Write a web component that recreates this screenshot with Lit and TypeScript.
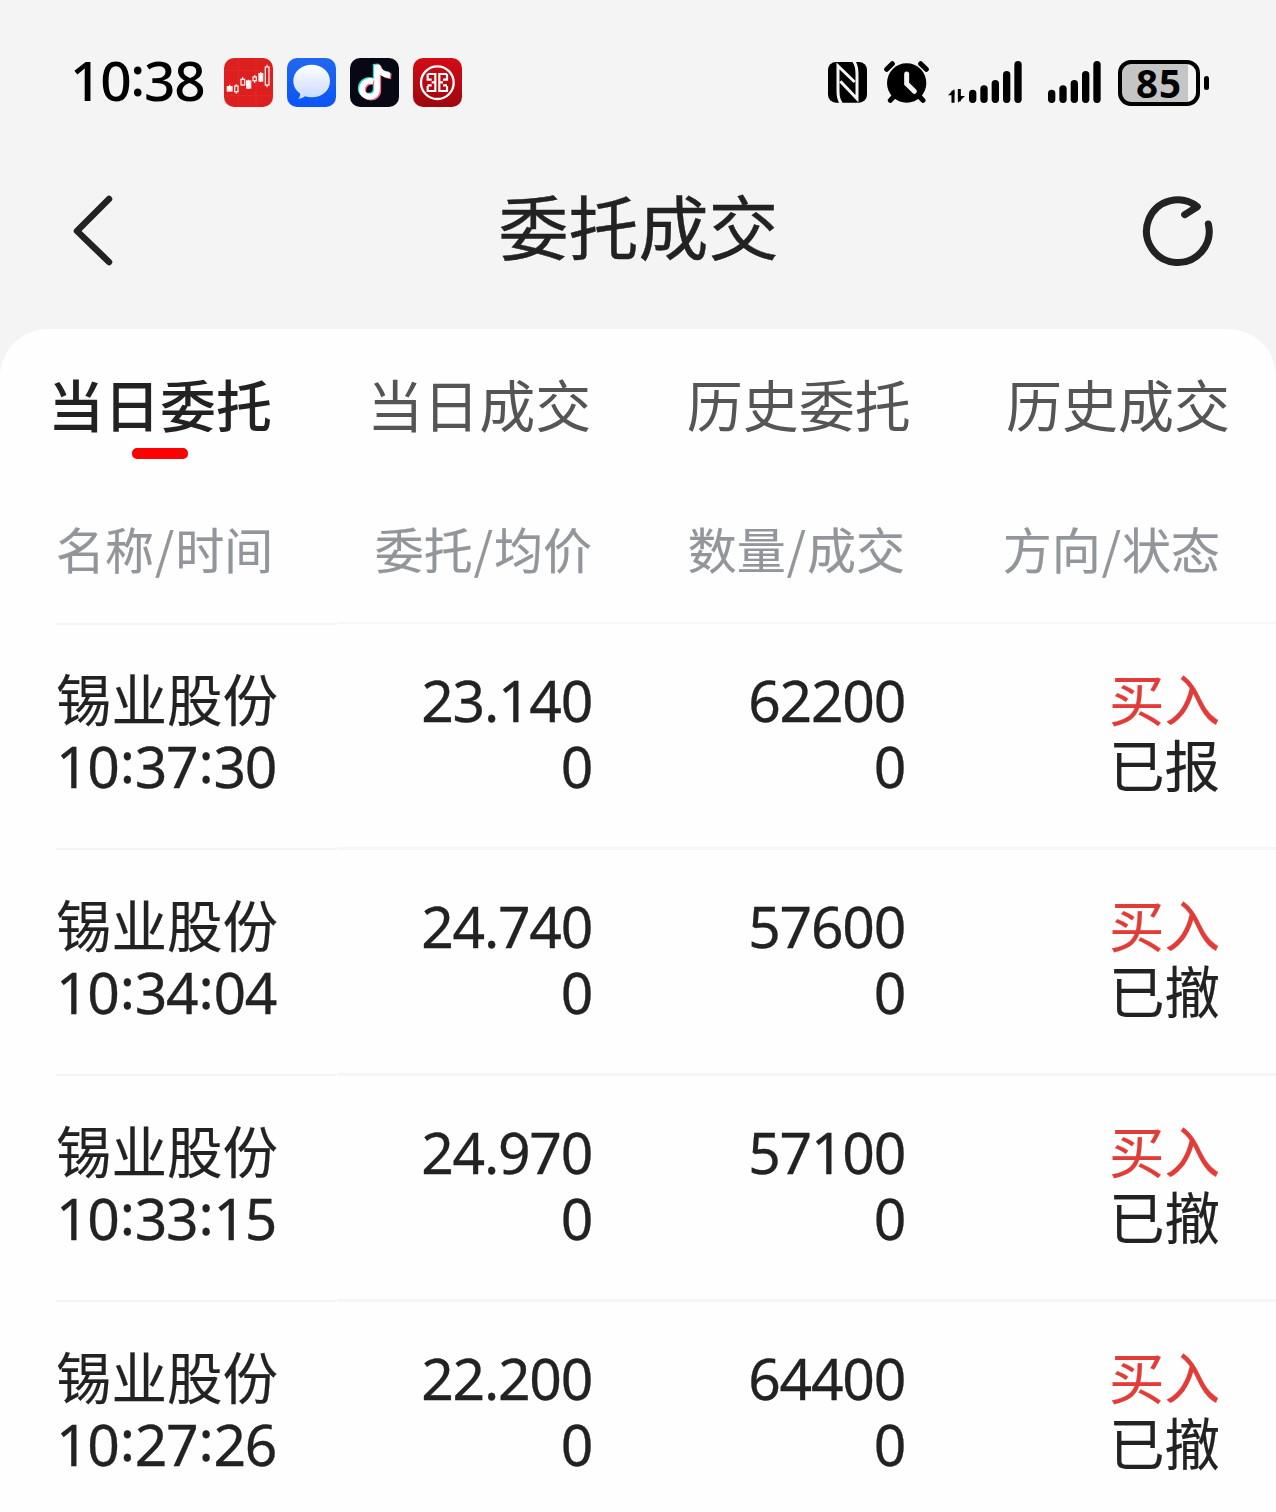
import { LitElement, html, svg, css } from "lit";
import { customElement } from "lit/decorators.js";

interface Order {
  name: string;
  time: string;
  price: string;
  avg: string;
  qty: string;
  filled: string;
  side: string;
  status: string;
}

const order = (time: string, price: string, qty: string, status: string): Order => ({
  name: "锡业股份", time, price, avg: "0", qty, filled: "0", side: "买入", status,
});

const ORDERS: Order[] = [
  order("10:37:30", "23.140", "62200", "已报"),
  order("10:34:04", "24.740", "57600", "已撤"),
  order("10:33:15", "24.970", "57100", "已撤"),
  order("10:27:26", "22.200", "64400", "已撤"),
];

const TABS = ["当日委托", "当日成交", "历史委托", "历史成交"];

/* Clock text with colons centred on the digit height. */
const clock = (t: string) =>
  t.split(":").map((p, i) => html`${i ? html`<span class="colon">:</span>` : ""}${p}`);

const shared = css`
  * { box-sizing: border-box; }
  .colon { vertical-align: 0.09em; line-height: 0; }
  svg { display: block; flex: none; }
`;

@customElement("status-bar")
export class StatusBar extends LitElement {
  static styles = [shared, css`
    :host { display: flex; align-items: flex-start; height: 164px; padding: 0 67px 0 70px; color: #000; }
    .time { width: 154px; padding-top: 40px; font: 500 55px/80px "Noto Sans", sans-serif; letter-spacing: -1.3px; white-space: nowrap; }
    .apps { display: flex; gap: 14px; padding-top: 58px; flex: 1; }
    .nfc { margin: 62px 17px 0 0; }
    .alarm { margin: 60px 19px 0 0; }
    .sig1 { margin: 60px 26px 0 0; }
    .sig2 { margin: 60px 17px 0 0; }
    .battery { display: flex; align-items: center; margin-top: 60px; gap: 4px; }
    .cell { width: 82px; height: 46px; border: 4px solid #000; border-radius: 13px; text-align: center;
      background: linear-gradient(90deg, #c5c5c5 66px, #f4f4f4 66px);
      font: 700 38.5px/39px "Noto Sans", sans-serif; letter-spacing: 1px; }
    .nub { width: 5px; height: 14px; border-radius: 3px; background: #000; }
  `];

  private bars(x: number) {
    const tops = [119, 106, 90, 63, 33];
    return tops.map((y, i) => svg`<rect x=${x + i * 34} y=${y} width="22" height=${159 - y} rx="11"/>`);
  }

  render() {
    return html`
      <div class="time">${clock("10:38")}</div>
      <div class="apps">
        <svg width="49" height="49" viewBox="0 0 147 147">
          <rect width="147" height="147" rx="30" fill="#de1f20"/>
          <path d="M43 0V147M96 0V147M0 38H147M0 113H147" stroke="#e3302c" stroke-width="2"/>
          <g stroke="#ffe9e6" stroke-width="4" fill="none">
            <path d="M17 80V101M37 79V107M56 57V84M73 65V93M92 51V75M110 42V72M129 20V88"/>
            <g fill="#fff"><rect x="10" y="86" width="14" height="13"/><rect x="68" y="69" width="12" height="21"/><rect x="105" y="47" width="11" height="22"/></g>
            <g fill="#de1f20"><rect x="32" y="84" width="10" height="17"/><rect x="51" y="64" width="11" height="17"/><rect x="87" y="57" width="10" height="11"/><rect x="124" y="27" width="11" height="54"/></g>
          </g>
        </svg>
        <svg width="49" height="49" viewBox="0 0 147 147">
          <defs>
            <linearGradient id="blue" x2="0" y2="1"><stop stop-color="#2268ee"/><stop offset="1" stop-color="#0a55f6"/></linearGradient>
            <linearGradient id="bubble" x2="0" y2="1"><stop stop-color="#fff"/><stop offset="1" stop-color="#c8dafd"/></linearGradient>
          </defs>
          <rect width="147" height="147" rx="30" fill="url(#blue)"/>
          <path d="M74 20C105 20 129 41 129 69C129 98 105 118 74 118C67 118 60 117 54 115C48 120 42 122 34 122C39 117 40 111 39 106C26 97 19 84 19 69C19 41 43 20 74 20Z" fill="url(#bubble)"/>
        </svg>
        <svg width="49" height="49" viewBox="0 0 147 147">
          <rect width="147" height="147" rx="30" fill="#080814"/>
          <g fill="none" stroke-width="17">
            <path d="M68 68C47 62 33 78 34 94C36 120 79 122 79 92V19C83 37 96 48 118 50" stroke="#33d8c8" transform="translate(-2 -1)"/>
            <path d="M68 68C47 62 33 78 34 94C36 120 79 122 79 92V19C83 37 96 48 118 50" stroke="#f4688a" transform="translate(6 5)"/>
            <path d="M68 68C47 62 33 78 34 94C36 120 79 122 79 92V19C83 37 96 48 118 50" stroke="#fff" transform="translate(2 2)"/>
          </g>
        </svg>
        <svg width="49" height="49" viewBox="0 0 147 147">
          <defs><linearGradient id="red" x2="0" y2="1"><stop stop-color="#d40b16"/><stop offset="1" stop-color="#9d070f"/></linearGradient></defs>
          <rect width="147" height="147" rx="30" fill="url(#red)"/>
          <circle cx="73" cy="74" r="49" fill="none" stroke="#fff" stroke-width="7"/>
          <path d="M44 48H67V73M44 48V65H56M44 82H56M67 73H56M67 73V99H44V84M102 48H79V73M102 48V65H90M102 82H90M79 73H90M79 73V99H102V84" fill="none" stroke="#fff" stroke-width="6.5"/>
        </svg>
      </div>
      <svg class="nfc" width="39" height="41" viewBox="24 36 117 123">
        <rect x="24" y="36" width="117" height="122" rx="24"/>
        <path d="M64 160Q54 148 54 122V48L104 96" fill="none" stroke="#f4f4f4" stroke-width="9"/>
        <path d="M61 94L111 146V72Q111 46 101 34" fill="none" stroke="#f4f4f4" stroke-width="9"/>
      </svg>
      <svg class="alarm" width="45" height="44" viewBox="192 30 135 132">
        <g fill="none" stroke="#000" stroke-width="15" stroke-linecap="round">
          <path d="M200 58L217 41M302 41L319 58M223 138L211 151M297 138L309 151"/>
        </g>
        <circle cx="260" cy="99" r="59"/>
        <path d="M260 72V101L283 124" fill="none" stroke="#f4f4f4" stroke-width="15" stroke-linecap="round"/>
      </svg>
      <svg class="sig1" width="74" height="44" viewBox="384 30 222 132">
        <path d="M399 158V122M418 117V154" fill="none" stroke="#000" stroke-width="9"/>
        <path d="M384 136L403 117V136ZM414 158L435 138H414Z"/>
        ${this.bars(447)}
      </svg>
      <svg class="sig2" width="53" height="44" viewBox="54 30 159 132">${this.bars(54)}</svg>
      <div class="battery"><div class="cell">85</div><div class="nub"></div></div>
    `;
  }
}

@customElement("title-bar")
export class TitleBar extends LitElement {
  static styles = [shared, css`
    :host { display: flex; align-items: flex-start; justify-content: space-between; height: 165px; padding: 0 61px 0 70px; color: #222; }
    .title { font: 400 70px/100px "Noto Sans CJK SC", sans-serif; padding-top: 11px; margin-left: 18px; -webkit-text-stroke: 0.4px #222; }
    .back { margin-top: 29px; }
    .refresh { margin-top: 30px; }
  `];
  render() {
    return html`
      <svg class="back" width="50" height="76" viewBox="0 0 50 76">
        <path d="M39 6L7 38L39 69" fill="none" stroke="#222" stroke-width="6.5" stroke-linecap="round" stroke-linejoin="round"/>
      </svg>
      <div class="title">委托成交</div>
      <svg class="refresh" width="76" height="76" viewBox="27 39 228 228">
        <path d="M235 129A94 94 0 1 1 202 77L164 101" fill="none" stroke="#222" stroke-width="21" stroke-linecap="round" stroke-linejoin="round"/>
      </svg>
    `;
  }
}

@customElement("tab-strip")
export class TabStrip extends LitElement {
  static styles = [shared, css`
    :host { display: flex; justify-content: space-between; height: 119px; padding: 34px 46px 0 48px; }
    .tab { display: flex; flex-direction: column; align-items: center; font: 400 56px/80px "Noto Sans CJK SC", sans-serif; color: #555; }
    .active { color: #222; font-weight: 500; }
    .active::after { content: ""; width: 56px; height: 11px; border-radius: 5px; background: #fe0000; margin-top: 5px; }
  `];
  render() {
    return html`${TABS.map((t, i) => html`<div class="tab ${i === 0 ? "active" : ""}">${t}</div>`)}`;
  }
}

@customElement("order-table")
export class OrderTable extends LitElement {
  static styles = [shared, css`
    :host { display: flex; padding-left: 56px; color: #222;
      font: 400 55.5px/66px "Noto Sans", "Noto Sans CJK SC", sans-serif; }
    .names { width: 280px; }
    .values { flex: 1; }
    .head { height: 142px; padding-top: 31px; font: 400 49px/70px "Noto Sans CJK SC", sans-serif; color: #929599; white-space: nowrap; -webkit-text-stroke: 0.2px currentColor; }
    .slash { margin: 0 1px; }
    .cell { height: 226px; padding-top: 43px; white-space: nowrap; }
    .names .cell { border-bottom: 2px solid #f5f5f5; }
    .names .head { height: 143px; margin-bottom: -1px; border-bottom: 2px solid #f5f5f5; }
    .line { display: grid; grid-template-columns: 255px 313px 315px; text-align: right; margin-left: 1px; }
    .values .cell { border-bottom: 3px solid #f6f6f6; }
    .values .head { border-bottom: 2px solid #f7f7f7; }
    .cell div { height: 66px; }
    .cjk { font-family: "Noto Sans CJK SC", sans-serif; line-height: 60px; -webkit-text-stroke: 0.2px currentColor; }
    .num { font-size: 57px; letter-spacing: -1.25px; -webkit-text-stroke: 0.3px currentColor; }
    .num .colon { margin: 0 1px; }
    .buy { color: #e23c39; }
  `];

  private heading(a: string, b: string) {
    return html`<span>${a}<span class="slash">/</span>${b}</span>`;
  }

  render() {
    return html`
      <div class="names">
        <div class="head">${this.heading("名称", "时间")}</div>
        ${ORDERS.map((o) => html`<div class="cell"><div class="cjk">${o.name}</div><div class="num">${clock(o.time)}</div></div>`)}
      </div>
      <div class="values">
        <div class="head line">${this.heading("委托", "均价")}${this.heading("数量", "成交")}${this.heading("方向", "状态")}</div>
        ${ORDERS.map((o) => html`
          <div class="cell line">
            <div class="num"><div>${o.price}</div><div>${o.avg}</div></div>
            <div class="num"><div>${o.qty}</div><div>${o.filled}</div></div>
            <div class="cjk"><div class="buy">${o.side}</div><div>${o.status}</div></div>
          </div>`)}
      </div>
    `;
  }
}

@customElement("app-root")
export class AppRoot extends LitElement {
  static styles = css`
    :host { display: block; height: 1512px; overflow: hidden; background: #f4f4f4; }
    .card { height: 1183px; overflow: hidden; background: #fefefe; border-radius: 48px 48px 0 0; }
  `;
  render() {
    return html`
      <status-bar></status-bar>
      <title-bar></title-bar>
      <div class="card"><tab-strip></tab-strip><order-table></order-table></div>
    `;
  }
}
